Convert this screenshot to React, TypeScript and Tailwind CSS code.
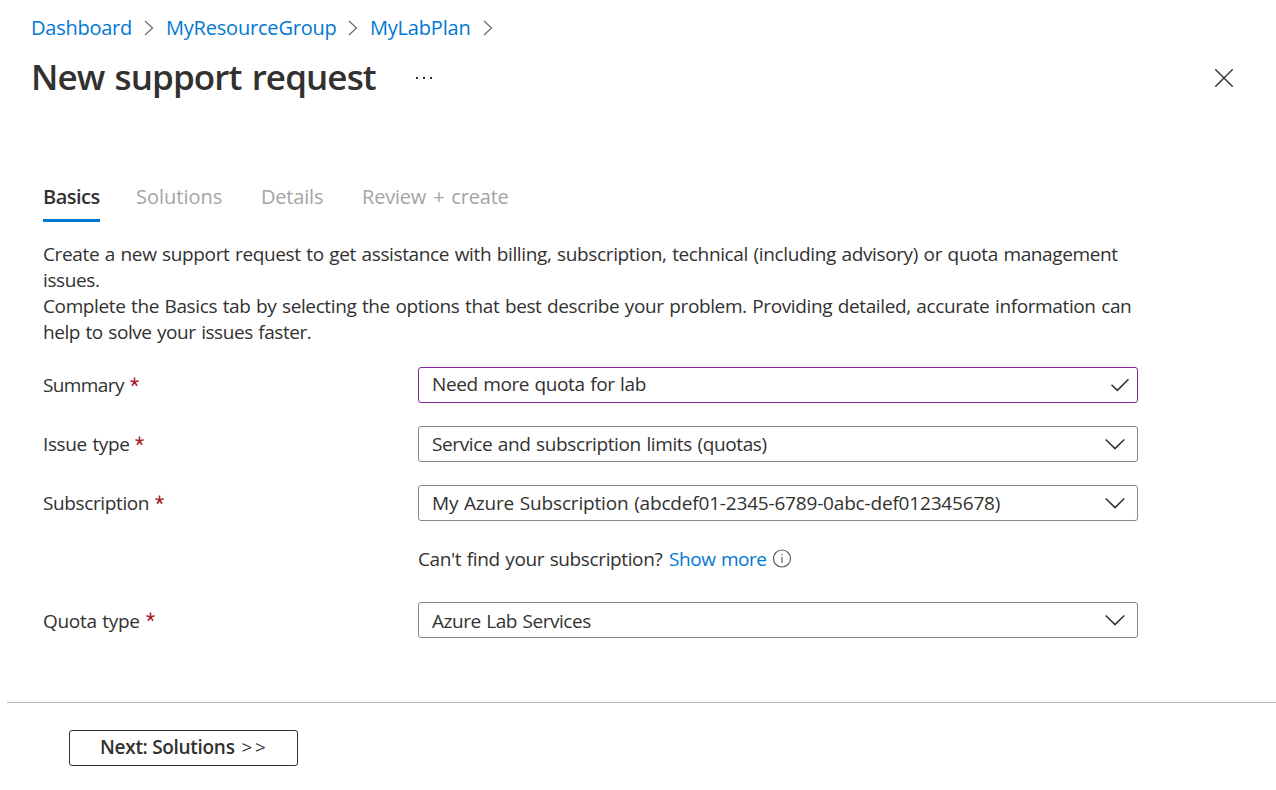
import type { ReactNode } from "react";

function Separator() {
  return (
    <svg className="h-4 w-2.5 shrink-0" viewBox="0 0 10 16" fill="none" stroke="#6b6967" strokeWidth="1.2">
      <path d="M1 1l7.5 7L1 15" />
    </svg>
  );
}

function Chevron() {
  return (
    <svg className="h-3 w-5 shrink-0" viewBox="0 0 20 12" fill="none" stroke="#323130" strokeWidth="1.5">
      <path d="M.7 1.500L10 10.600l9.300-9.100" />
    </svg>
  );
}

function Check() {
  return (
    <svg className="mt-0.5 -mr-[5px] h-3.5 w-5 shrink-0" viewBox="0 0 20 14" fill="none" stroke="#323130" strokeWidth="1.5">
      <path d="M1.500 6.800l5.900 5.600L18.500 1.300" />
    </svg>
  );
}

function Label({ children }: { children: ReactNode }) {
  return (
    <div className="flex w-[375px] shrink-0 items-center gap-[6px]">
      {children}
      <svg className="-mt-1.5 h-[11px] w-[9px]" viewBox="0 0 9 10" fill="none" stroke="#a4262c" strokeWidth="1.600">
        <path d="M4.500 0v4.500M4.500 4.500L.4 3.200M4.500 4.500l4.100-1.300M4.500 4.500L2 8.200M4.500 4.500L7 8.200" />
      </svg>
    </div>
  );
}

function Field({ children, icon, active = false }: { children: ReactNode; icon: ReactNode; active?: boolean }) {
  return (
    <div
      className={
        active
          ? "flex h-9 w-[720px] items-center justify-between rounded-[3px] border border-[#8a25a3] pr-3 pb-0.5 pl-[13px] tracking-[-0.4px]"
          : "flex h-9 w-[720px] items-center justify-between rounded-[3px] border border-[#8a8886] pr-3 pl-[13px]"
      }
    >
      {children}
      {icon}
    </div>
  );
}

export default function App() {
  return (
    <div className="flex h-[790px] w-[1276px] flex-col overflow-hidden bg-white font-['Open_Sans',sans-serif] text-[19px] leading-[26px] whitespace-nowrap text-[#323130]">
      <nav className="flex h-14 items-center pl-[31px] text-[20px] text-[#0078d4]">
        <a className="w-[113px] tracking-[-0.25px]">Dashboard</a>
        <Separator />
        <a className="ml-3 w-[182px] tracking-[-0.2px]">MyResourceGroup</a>
        <Separator />
        <a className="ml-3 w-[113px] tracking-[-0.2px]">MyLabPlan</a>
        <Separator />
      </nav>
      <header className="flex h-[44px] items-center pr-[43px] pl-[31px]">
        <h1 className="-mt-0.5 w-[384px] text-[35px] leading-[44px] font-semibold tracking-[-0.9px] [word-spacing:2px]">New support request</h1>
        <svg className="h-1 w-[18px]" viewBox="0 0 18 4" fill="#323130">
          <path d="M1 1h2v2H1zM8 1h2v2H8zM15 1h2v2h-2z" />
        </svg>
        <svg className="ml-auto h-[18px] w-[18px]" viewBox="0 0 18 18" fill="none" stroke="#323130" strokeWidth="1.400">
          <path d="M.3.3l17.400 17.400M17.700.3L.3 17.700" />
        </svg>
      </header>
      <div className="mt-[78px] flex h-11 pl-[43px] text-[20px] leading-[38px] text-[#a6a4a2]">
        <div className="mr-[36px] w-[57px] border-b-3 border-[#0078d4] font-semibold tracking-[-0.5px] text-[#323130]">Basics</div>
        <div className="w-[125px]">Solutions</div>
        <div className="w-[101px] tracking-[-0.2px]">Details</div>
        <div className="tracking-[-0.2px] [word-spacing:2px]">Review + create</div>
      </div>
      <div className="mt-[19px] pl-[43px] tracking-[-0.38px] [word-spacing:1px]">
        <p className="tracking-[-0.365px]">Create a new support request to get assistance with billing, subscription, technical (including advisory) or quota management</p>
        <p>issues.</p>
        <p>Complete the Basics tab by selecting the options that best describe your problem. Providing detailed, accurate information can</p>
        <p className="tracking-[-0.44px]">help to solve your issues faster.</p>
      </div>
      <div className="mt-[22px] flex flex-col pl-[43px] tracking-[-0.38px] [word-spacing:1px]">
        <div className="flex items-center">
          <Label>
            <span className="tracking-[-0.6px]">Summary</span>
          </Label>
          <Field active icon={<Check />}>Need more quota for lab</Field>
        </div>
        <div className="mt-[23px] flex items-center">
          <Label>Issue type</Label>
          <Field icon={<Chevron />}>Service and subscription limits (quotas)</Field>
        </div>
        <div className="mt-[23px] flex items-center">
          <Label>Subscription</Label>
          <Field icon={<Chevron />}>
            <span className="tracking-[-0.18px]">My Azure Subscription (abcdef01-2345-6789-0abc-def012345678)</span>
          </Field>
        </div>
        <div className="mt-[25px] flex items-center pl-[375px]">
          <span className="w-[251px]">Can't find your subscription?</span>
          <a className="w-[104px] tracking-[-0.45px] text-[#0078d4]">Show more</a>
          <svg className="-mt-px h-[19px] w-[19px]" viewBox="0 0 19 19" fill="none" stroke="#605e5c" strokeWidth="1.200">
            <circle cx="9" cy="9.500" r="8.500" />
            <path d="M9 8v6M9 5v1.500" />
          </svg>
        </div>
        <div className="mt-[30px] flex items-center">
          <Label>
            <span className="pt-0.5 tracking-[-0.3px]">Quota type</span>
          </Label>
          <Field icon={<Chevron />}>
            <span className="pt-0.5 tracking-[-0.45px]">Azure Lab Services</span>
          </Field>
        </div>
      </div>
      <footer className="mt-16 ml-[7px] border-t border-[#b8b6b4] pt-[27px] pl-[62px]">
        <button className="flex h-9 w-[229px] items-center gap-[7px] rounded-[3px] border border-[#323130] pb-0.5 pl-[30px] font-semibold tracking-[-0.3px]">
          <span>Next: Solutions</span>
          <span className="font-medium tracking-[2.5px]">&gt;&gt;</span>
        </button>
      </footer>
    </div>
  );
}
